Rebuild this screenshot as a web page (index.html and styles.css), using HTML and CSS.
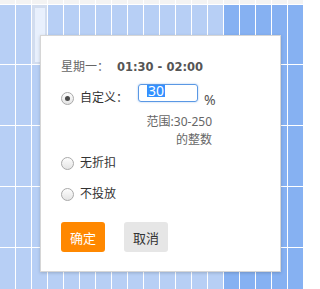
FILE: index.html
```html
<!DOCTYPE html>
<html lang="zh">
<head>
<meta charset="utf-8">
<title>折扣设置</title>
<link rel="stylesheet" href="styles.css">
</head>
<body>
<div class="board">
  <div class="grid">
    <div class="row head">
      <div class="c"></div><div class="c"></div><div class="c"></div><div class="c"></div><div class="c"></div><div class="c"></div><div class="c"></div><div class="c"></div><div class="c"></div><div class="c"></div><div class="c"></div><div class="c"></div><div class="c"></div><div class="c"></div><div class="c"></div><div class="c"></div><div class="c"></div><div class="c"></div><div class="c"></div>
    </div>
    <div class="row first">
      <div class="c"></div><div class="c"></div><div class="c sel"><div class="sel-in"></div></div><div class="c"></div><div class="c"></div><div class="c"></div><div class="c"></div><div class="c"></div><div class="c"></div><div class="c"></div><div class="c"></div><div class="c"></div><div class="c"></div><div class="c"></div><div class="c d"></div><div class="c d"></div><div class="c d"></div><div class="c d"></div><div class="c d"></div>
    </div>
    <div class="row">
      <div class="c"></div><div class="c"></div><div class="c"></div><div class="c"></div><div class="c"></div><div class="c"></div><div class="c"></div><div class="c"></div><div class="c"></div><div class="c"></div><div class="c"></div><div class="c"></div><div class="c"></div><div class="c"></div><div class="c d"></div><div class="c d"></div><div class="c d"></div><div class="c d"></div><div class="c d"></div>
    </div>
    <div class="row">
      <div class="c"></div><div class="c"></div><div class="c"></div><div class="c"></div><div class="c"></div><div class="c"></div><div class="c"></div><div class="c"></div><div class="c"></div><div class="c"></div><div class="c"></div><div class="c"></div><div class="c"></div><div class="c"></div><div class="c d"></div><div class="c d"></div><div class="c d"></div><div class="c d"></div><div class="c d"></div>
    </div>
    <div class="row">
      <div class="c"></div><div class="c"></div><div class="c"></div><div class="c"></div><div class="c"></div><div class="c"></div><div class="c"></div><div class="c"></div><div class="c"></div><div class="c"></div><div class="c"></div><div class="c"></div><div class="c"></div><div class="c"></div><div class="c d"></div><div class="c d"></div><div class="c d"></div><div class="c d"></div><div class="c d"></div>
    </div>
    <div class="row">
      <div class="c"></div><div class="c"></div><div class="c"></div><div class="c"></div><div class="c"></div><div class="c"></div><div class="c"></div><div class="c"></div><div class="c"></div><div class="c"></div><div class="c"></div><div class="c"></div><div class="c"></div><div class="c"></div><div class="c d"></div><div class="c d"></div><div class="c d"></div><div class="c d"></div><div class="c d"></div>
    </div>
  </div>

  <div class="popup">
    <div class="title"><span class="day">星期一：</span><span class="time">01:30 - 02:00</span></div>
    <div class="opt custom">
      <span class="radio on"></span>
      <span class="label">自定义：</span>
      <div class="input"><span class="selected">30</span></div>
      <span class="pct">%</span>
    </div>
    <div class="range">范围:30-250<br>的整数</div>
    <div class="opt plain"><span class="radio"></span><span class="label">无折扣</span></div>
    <div class="opt plain last"><span class="radio"></span><span class="label">不投放</span></div>
    <div class="actions">
      <button class="btn ok">确定</button>
      <button class="btn cancel">取消</button>
    </div>
  </div>
</div>
</body>
</html>
```
FILE: styles.css
```css
html, body {
  margin: 0;
  padding: 0;
  background: #fff;
}
body {
  font-family: "Noto Sans", "Noto Sans CJK SC", sans-serif;
  font-size: 12px;
  color: #333;
}
.board {
  position: relative;
  width: 303px;
  height: 289px;
  overflow: hidden;
  background: #fff;
}
.grid {
  display: flex;
  flex-direction: column;
  gap: 1px;
}
.row {
  display: flex;
  gap: 1px;
  height: 60px;
}
.row.head {
  height: 4px;
}
.row.first {
  height: 59px;
}
.c {
  flex: none;
  width: 15px;
  background: #b7cff5;
}
.head .c {
  background: #f3f3f3;
}
.c.d {
  background: #86b1f2;
}
.c.sel {
  background: #d2ddef;
  display: flex;
  justify-content: center;
  padding-top: 3px;
  box-sizing: border-box;
}
.sel-in {
  width: 10px;
  height: 54px;
  background: #e8f0fd;
}
.popup {
  position: absolute;
  left: 40px;
  top: 35px;
  width: 241px;
  height: 237px;
  box-sizing: border-box;
  background: #fff;
  border: 1px solid #d6d6d6;
  box-shadow: 0 1px 3px rgba(0, 0, 0, 0.18);
  padding: 21px 0 0 20px;
  display: flex;
  flex-direction: column;
}
.title {
  line-height: 20px;
  height: 20px;
  display: flex;
  align-items: center;
  color: #666;
}
.day {
  width: 56px;
  font-size: 12px;
}
.time {
  font-family: "DejaVu Sans", "Noto Sans CJK SC", sans-serif;
  font-weight: bold;
  font-size: 11.5px;
  color: #555;
}
.opt {
  display: flex;
  align-items: center;
  height: 20px;
  line-height: 20px;
}
.custom {
  margin-top: 11px;
}
.radio {
  flex: none;
  width: 11px;
  height: 11px;
  border: 1px solid #a9a9a9;
  border-radius: 50%;
  background: linear-gradient(#fdfdfd, #e4e4e4);
  margin-right: 6px;
  display: flex;
  align-items: center;
  justify-content: center;
}
.radio.on::after {
  content: "";
  width: 5px;
  height: 5px;
  border-radius: 50%;
  background: #4a4a4a;
}
.label {
  color: #333;
}
.custom .label {
  width: 58px;
}
.input {
  flex: none;
  width: 50px;
  height: 16px;
  border: 1px solid #5a98e4;
  border-radius: 3px;
  box-shadow: 0 0 2px rgba(90, 152, 228, 0.6);
  margin-bottom: 10px;
  display: flex;
  align-items: flex-start;
  padding: 0 0 0 8px;
  font-size: 14px;
}
.selected {
  background: #3390ff;
  color: #fff;
  height: 12px;
  line-height: 12px;
  padding: 0 1px;
  margin-top: 0;
  display: flex;
  align-items: center;
}
.pct {
  margin-left: 6px;
  margin-top: 4px;
  color: #555;
  font-size: 14px;
}
.range {
  margin-top: 5px;
  width: 151px;
  text-align: right;
  line-height: 18px;
  color: #666;
}
.plain {
  margin-top: 4px;
}
.plain.last {
  margin-top: 11px;
}
.actions {
  display: flex;
  gap: 19px;
  margin-top: 18px;
}
.btn {
  width: 44px;
  height: 30px;
  border: none;
  border-radius: 3px;
  font-family: "Noto Sans", "Noto Sans CJK SC", sans-serif;
  font-size: 13px;
  padding: 0;
  cursor: pointer;
}
.btn.ok {
  background: #ff8800;
  color: #fff;
}
.btn.cancel {
  background: #e6e6e6;
  color: #333;
}
```
